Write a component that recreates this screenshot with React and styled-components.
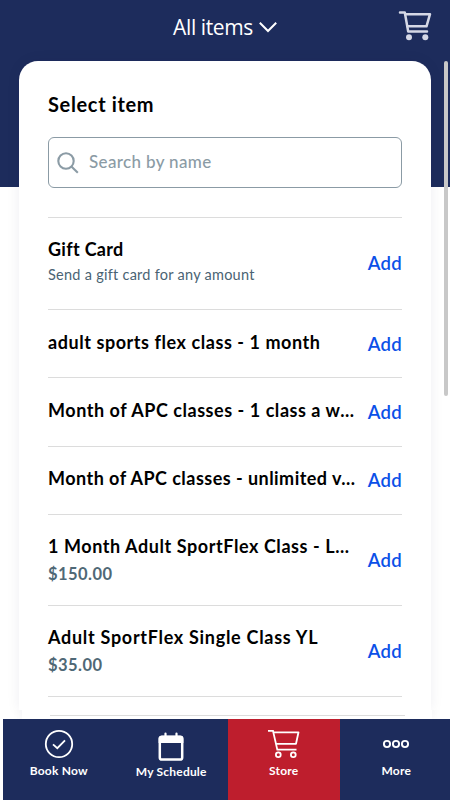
import React from 'react';
import styled, { createGlobalStyle } from 'styled-components';

const items = [
  { name: 'Gift Card', note: 'Send a gift card for any amount', height: 92.5, track: 0.3 },
  { name: 'adult sports flex class - 1 month', height: 68.3, track: 0.56 },
  { name: 'Month of APC classes - 1 class a w...', height: 68.3, track: 0.54 },
  { name: 'Month of APC classes - unlimited v...', height: 68.4, track: 0.46 },
  { name: '1 Month Adult SportFlex Class - L...', price: '$150.00', height: 91, track: 0.57 },
  { name: 'Adult SportFlex Single Class YL', price: '$35.00', height: 91.5, track: 0.71 },
];

const HeaderCart = () => (
  <svg width="34" height="32" viewBox="0 0 34 32" fill="none" stroke="#d5d8e6" strokeWidth="2.5" strokeLinecap="round" strokeLinejoin="round">
    <path d="M2 2.5H6.8L10.2 21.5H29" />
    <path d="M7.3 4.2H32L28.5 16.3H9.4" />
    <circle cx="11" cy="27.3" r="3" fill="#d5d8e6" stroke="none" />
    <circle cx="27.3" cy="27.3" r="3" fill="#d5d8e6" stroke="none" />
  </svg>
);

const Chevron = () => (
  <svg width="18" height="12" viewBox="0 0 18 12" fill="none" stroke="#fff" strokeWidth="2">
    <path d="M0.8 1.8L9 10L17.2 1.8" />
  </svg>
);

const SearchIcon = () => (
  <svg width="22" height="22" viewBox="0 0 22 22" fill="none" stroke="#8b9ba5" strokeWidth="2.1">
    <circle cx="9" cy="9" r="7.7" />
    <path d="M14.4 14.4L20.8 20.8" />
  </svg>
);

const BookIcon = () => (
  <svg width="30" height="30" viewBox="0 0 30 30" fill="none" stroke="#fff" strokeWidth="1.8">
    <circle cx="15" cy="15" r="13.2" />
    <path d="M9 15.3L13.3 19.2L21 11.3" />
  </svg>
);

const CalendarIcon = () => (
  <svg width="26" height="30" viewBox="0 0 26 30" fill="none">
    <path d="M7.5 1.5V6M18.5 1.5V6" stroke="#fff" strokeWidth="2.2" strokeLinecap="round" />
    <rect x="1.8" y="4.8" width="22.4" height="22.8" rx="2.2" stroke="#fff" strokeWidth="2.5" />
    <path d="M0.6 6.5Q0.6 3.8 3.3 3.8H22.7Q25.4 3.8 25.4 6.5V11H0.6Z" fill="#fff" />
  </svg>
);

const StoreIcon = () => (
  <svg width="32" height="30" viewBox="0 0 32 30" fill="none" stroke="#fff" strokeWidth="1.8">
    <path d="M0 1.8H5L9.3 20.6H28.5" />
    <path d="M5.5 3.3H30.5L28 14.8H8" strokeLinejoin="round" />
    <circle cx="10.3" cy="25.7" r="2.4" />
    <circle cx="25.3" cy="25.7" r="2.4" />
  </svg>
);

const MoreIcon = () => (
  <svg width="28" height="10" viewBox="0 0 28 10" fill="none" stroke="#fff" strokeWidth="1.9">
    <circle cx="5" cy="5" r="3.1" />
    <circle cx="14" cy="5" r="3.1" />
    <circle cx="23" cy="5" r="3.1" />
  </svg>
);

const App = () => {
  return (
    <Page>
      <GlobalStyle />
      <Header>
        <Filter>
          <span>All items</span>
          <Chevron />
        </Filter>
        <Cart>
          <HeaderCart />
        </Cart>
      </Header>
      <Card>
        <Heading>Select item</Heading>
        <Search>
          <SearchIcon />
          <Placeholder>Search by name</Placeholder>
        </Search>
        <List>
          {items.map((item) => (
            <Row key={item.name} $height={item.height}>
              <Info>
                <Name $track={item.track}>{item.name}</Name>
                {item.note && <Note>{item.note}</Note>}
                {item.price && <Price>{item.price}</Price>}
              </Info>
              <Add>Add</Add>
            </Row>
          ))}
        </List>
      </Card>
      <NextCard>
        <NextLine />
      </NextCard>
      <Nav>
        <Tab>
          <IconBox><BookIcon /></IconBox>
          <Label>Book Now</Label>
        </Tab>
        <Tab>
          <IconBox $drop={6}><CalendarIcon /></IconBox>
          <Label $drop={1}>My Schedule</Label>
        </Tab>
        <Tab $active>
          <IconBox><StoreIcon /></IconBox>
          <Label>Store</Label>
        </Tab>
        <Tab>
          <IconBox><MoreIcon /></IconBox>
          <Label>More</Label>
        </Tab>
      </Nav>
      <Scrollbar />
    </Page>
  );
};

const GlobalStyle = createGlobalStyle`
* {
  box-sizing: border-box;
}
body {
  margin: 0;
  overflow: hidden;
}
svg {
  display: block;
  flex: none;
}
`;

const Page = styled.div`
position: relative;
width: 450px;
height: 800px;
overflow: hidden;
display: flex;
flex-direction: column;
font-family: Lato, "Liberation Sans", sans-serif;
background: linear-gradient(#1d2c5c 187px, #fff 187px);
`;

const Header = styled.header`
height: 61px;
flex: none;
display: grid;
grid-template-columns: 1fr auto 1fr;
padding: 0 18px;
`;

const Filter = styled.div`
grid-column: 2;
height: 53px;
display: flex;
align-items: center;
gap: 6px;
color: #fff;
font-family: "Open Sans", sans-serif;
font-size: 21px;
font-weight: 400;
letter-spacing: -0.4px;
`;

const Cart = styled.div`
justify-self: end;
padding-top: 10px;
`;

const Card = styled.main`
height: 649px;
flex: none;
margin: 0 19px;
padding: 31px 29px 0;
background: #fff;
border-radius: 19px 19px 0 0;
box-shadow: 0 0 14px rgba(20, 25, 70, 0.07);
`;

const Heading = styled.h1`
margin: 0;
font-size: 20px;
line-height: 24px;
font-weight: 700;
letter-spacing: 0.65px;
`;

const Search = styled.div`
height: 51px;
margin-top: 21px;
padding-left: 8px;
display: flex;
align-items: center;
gap: 10px;
border: 1px solid #8b9ba5;
border-radius: 6px;
color: #8b9ba5;
`;

const Placeholder = styled.span`
padding-bottom: 2px;
font-size: 17px;
font-weight: 500;
letter-spacing: 0.35px;
`;

const List = styled.div`
margin-top: 28.5px;
border-bottom: 1px solid #dcdcdc;
`;

const Row = styled.div`
height: ${(p) => p.$height}px;
display: flex;
justify-content: space-between;
align-items: center;
border-top: 1px solid #dcdcdc;
`;

const Info = styled.div`
align-self: flex-start;
padding-top: 18.5px;
white-space: nowrap;
`;

const Name = styled.div`
font-size: 18px;
line-height: 26px;
font-weight: 700;
letter-spacing: ${(p) => p.$track}px;
`;

const Note = styled.div`
font-size: 14.5px;
line-height: 26px;
color: #4a6373;
letter-spacing: 0.26px;
`;

const Price = styled.div`
font-size: 16.5px;
line-height: 30px;
font-weight: 700;
color: #4f6876;
letter-spacing: 0.45px;
`;

const Add = styled.button`
padding: 0;
border: 0;
background: none;
font-family: inherit;
font-size: 18.5px;
font-weight: 600;
color: #0b50e8;
letter-spacing: 0.3px;
`;

const NextCard = styled.div`
height: 9px;
flex: none;
margin: 0 18px 0 22px;
padding: 5px 27px 0 28px;
background: #fff;
box-shadow: 0 0 14px rgba(20, 25, 70, 0.07);
clip-path: inset(0 -20px 0 -20px);
`;

const NextLine = styled.div`
height: 1px;
background: #dcdcdc;
`;

const Nav = styled.nav`
height: 81px;
flex: none;
margin-left: 2.5px;
width: 450px;
display: grid;
grid-template-columns: repeat(4, 1fr);
background: #1d2c5c;
`;

const Tab = styled.div`
display: flex;
flex-direction: column;
align-items: center;
padding-top: 10px;
background: ${(p) => (p.$active ? '#be1e2d' : '#1d2c5c')};
`;

const IconBox = styled.div`
height: 30px;
padding-top: ${(p) => p.$drop || 0}px;
display: flex;
align-items: center;
`;

const Label = styled.span`
margin-top: ${(p) => 4 + (p.$drop || 0)}px;
line-height: 16px;
font-size: 12px;
font-weight: 700;
color: #fff;
letter-spacing: 0.2px;
`;

const Scrollbar = styled.div`
position: absolute;
top: 61px;
right: 2px;
width: 4px;
height: 335px;
border-radius: 2px;
background: #c8c8c8;
`;

export default App;
